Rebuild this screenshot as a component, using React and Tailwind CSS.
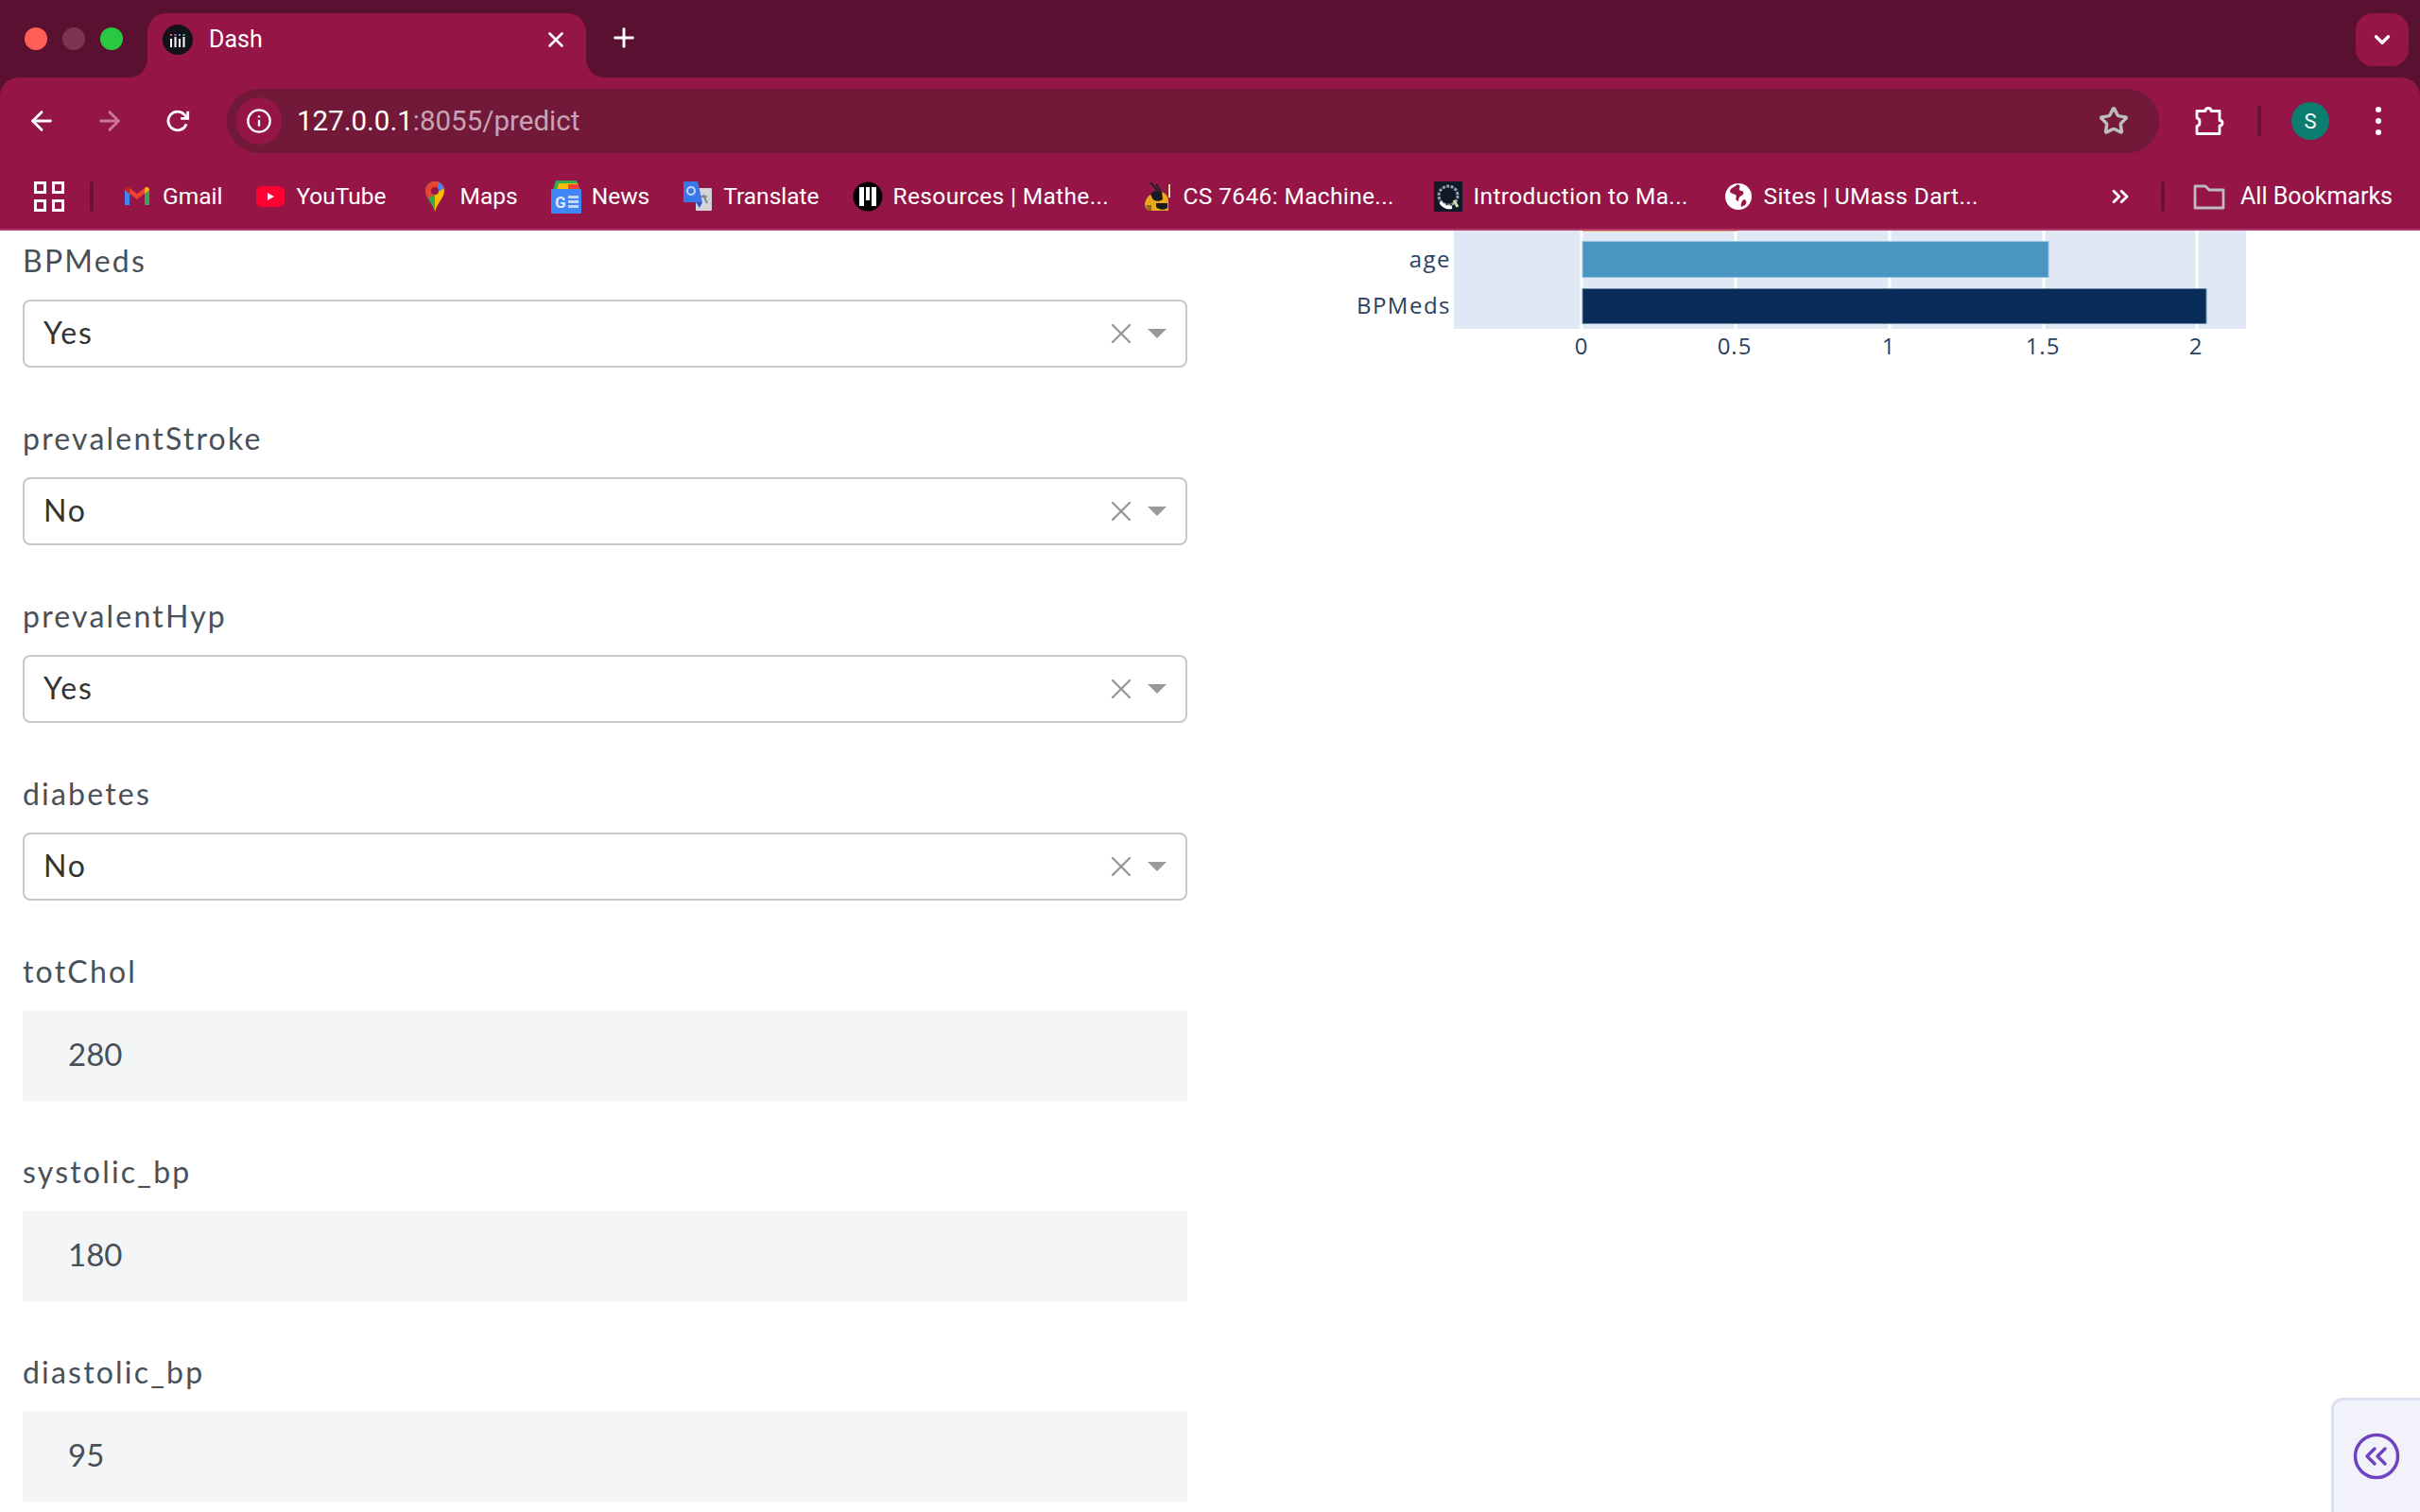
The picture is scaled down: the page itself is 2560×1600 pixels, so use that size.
import React from 'react';
import { ArrowLeft, ArrowRight, Info, Star, X, Plus, ChevronDown, ChevronsRight } from 'lucide-react';

// favicons for the bookmarks bar
const GmailIcon = () => (
  <svg width="32" height="32" viewBox="0 0 32 32">
    <path d="M3 9v16h5V13z" fill="#4285f4" />
    <path d="M24 13v12h5V9z" fill="#34a853" />
    <path d="M3 9l13 10L29 9l-5-2-8 6-8-6z" fill="#ea4335" />
    <path d="M3 9c0-3 3-4 5-2v6z" fill="#c5221f" />
    <path d="M29 9c0-3-3-4-5-2v6z" fill="#fbbc04" />
  </svg>
);

const YoutubeIcon = () => (
  <svg width="32" height="32" viewBox="0 0 32 32">
    <rect x="1" y="5" width="30" height="22" rx="6" fill="#ff0033" />
    <path d="M13 12l7 4-7 4z" fill="#fff" />
  </svg>
);

const MapsIcon = () => (
  <svg width="32" height="36" viewBox="0 0 32 36">
    <path d="M16 2c-6 0-10 4.500-10 10 0 7 7 12 10 22z" fill="#34a853" />
    <path d="M16 2c6 0 10 4.500 10 10 0 7-7 12-10 22z" fill="#fbbc04" />
    <path d="M9 5c2-2 4.500-3 7-3 4 0 8 2 9.500 7L9 20c-2-2.500-3-5-3-8 0-3 1-5.500 3-7z" fill="#ea4335" />
    <path d="M19 2.500c3 1 5.500 3.500 6.500 6.500L19 13z" fill="#4285f4" />
    <circle cx="16" cy="12" r="4" fill="#941546" />
  </svg>
);

const NewsIcon = () => (
  <svg width="32" height="38" viewBox="0 0 32 38">
    <path d="M5 2h22l3 10H2z" fill="#34a853" />
    <path d="M8 5h20l2 7H6z" fill="#fbbc04" />
    <path d="M18 6h10l2 6H18z" fill="#ea4335" />
    <rect x="0" y="11" width="32" height="26" rx="1" fill="#4285f4" />
    <text x="4" y="31" fontSize="17" fontWeight="700" fontFamily="Roboto, sans-serif" fill="#dfe8fb">G</text>
    <rect x="18" y="18" width="11" height="3" fill="#c6d8fa" />
    <rect x="18" y="23" width="11" height="3" fill="#c6d8fa" />
    <rect x="18" y="28" width="11" height="3" fill="#c6d8fa" />
  </svg>
);

const TranslateIcon = () => (
  <svg width="32" height="34" viewBox="0 0 32 34">
    <rect x="14" y="8" width="17" height="24" rx="1" fill="#d4d4d8" />
    <path d="M22 15l4 9M18 17h8" stroke="#7c8a94" strokeWidth="2" fill="none" />
    <path d="M2 1h14l5 22H2a1 1 0 0 1-1-1V2a1 1 0 0 1 1-1z" fill="#3b78e7" />
    <path d="M14 23l4 6 3-6z" fill="#2a56c6" />
    <circle cx="9" cy="11" r="4" fill="none" stroke="#c7d8fa" strokeWidth="2" />
  </svg>
);

const ResourcesIcon = () => (
  <svg width="32" height="32" viewBox="0 0 32 32">
    <circle cx="16" cy="16" r="15.500" fill="#000" />
    <rect x="7" y="6" width="5" height="20" fill="#fff" />
    <rect x="14" y="6" width="4" height="14" fill="#fff" />
    <rect x="20" y="6" width="5" height="20" fill="#fff" />
  </svg>
);

const BeeIcon = () => (
  <svg width="32" height="34" viewBox="0 0 32 34">
    <path d="M2 24c2-8 8-12 16-12 5 0 9 4 9 10v10H8c-4 0-6-4-6-8z" fill="#e9a820" />
    <path d="M8 14c3-3 8-4 12-2l1 8c-4 3-9 2-11-1z" fill="#1a1a1a" />
    <path d="M14 24h12v5c-4 3-9 2-12-1z" fill="#1a1a1a" />
    <path d="M3 26h6v6H6z" fill="#8a6a20" />
    <path d="M8 2l8 9M14 4l5 7" stroke="#222" strokeWidth="2" />
    <rect x="27" y="4" width="2" height="14" fill="#e8d9a0" />
  </svg>
);

const IntroIcon = () => (
  <svg width="30" height="32" viewBox="0 0 30 32">
    <rect width="30" height="32" fill="#111827" />
    <circle cx="15" cy="15" r="10" fill="none" stroke="#9ca3af" strokeWidth="3" strokeDasharray="3 1.500" />
    <path d="M7 22c3 5 8 6 12 5" fill="none" stroke="#fff" strokeWidth="3.500" />
    <path d="M21 20l4 7" stroke="#cfe0a0" strokeWidth="3" />
  </svg>
);

const GlobeIcon = () => (
  <svg width="32" height="32" viewBox="0 0 32 32">
    <circle cx="16" cy="16" r="14" fill="#fff" />
    <path d="M15 3c-2 3-7 3-8 7 0 3 4 3 6 4 2 2-1 4 1 6l2 1c0-3 1-5 3-6 3-1 3-4 1-5-2 0-4-1-3-3 1-1 1-3-2-4zM22 19c-2 1-4 4-3 8l4-2c2-2 2-5-1-6z" fill="#941546" />
  </svg>
);

const ReloadIcon = () => (
  <svg width="30" height="30" viewBox="0 0 28 28" fill="none" stroke="#fff" strokeWidth="2.600">
    <path d="M22.500 17a9.200 9.200 0 1 1-1.800-9.200L23.500 11" />
    <path d="M24 4.500V11.500H17" />
  </svg>
);

const PuzzleIcon = () => (
  <svg width="34" height="34" viewBox="0 0 34 34" fill="none" stroke="#fff" strokeWidth="2.800" strokeLinejoin="round">
    <path d="M4 6.500h9c0-4 6-4 6 0h9v10c4 0 4 5.500 0 5.500v8.500H4v-8c4-.5 4-8-.0-8.500z" />
  </svg>
);

// long titles get cut to one fixed width by the browser, so those labels share it
const bookmarks = [
  { label: 'Gmail', icon: <GmailIcon /> },
  { label: 'YouTube', icon: <YoutubeIcon /> },
  { label: 'Maps', icon: <MapsIcon /> },
  { label: 'News', icon: <NewsIcon /> },
  { label: 'Translate', icon: <TranslateIcon /> },
  { label: 'Resources | Mathe...', icon: <ResourcesIcon />, cut: true },
  { label: 'CS 7646: Machine...', icon: <BeeIcon />, cut: true },
  { label: 'Introduction to Ma...', icon: <IntroIcon />, cut: true },
  { label: 'Sites | UMass Dart...', icon: <GlobeIcon />, cut: true },
];

const TabStrip = () => (
  <div className="flex h-[82px] items-start bg-[#5a1030]">
    <div className="flex h-[82px] w-[156px] items-center gap-[16px] pl-[26px]">
      <span className="h-[24px] w-[24px] rounded-full bg-[#ff5f57]" />
      <span className="h-[24px] w-[24px] rounded-full bg-[#7b3552]" />
      <span className="h-[24px] w-[24px] rounded-full bg-[#28c840]" />
    </div>
    <div className="relative mt-[14px] flex h-[68px] w-[464px] items-center rounded-t-[20px] bg-[#941546] pb-[12px] pl-[16px] pr-[19px]">
      <span className="absolute bottom-0 left-[-20px] h-[20px] w-[20px] bg-[#941546]">
        <span className="block h-full w-full rounded-br-[20px] bg-[#5a1030]" />
      </span>
      <span className="absolute bottom-0 right-[-20px] h-[20px] w-[20px] bg-[#941546]">
        <span className="block h-full w-full rounded-bl-[20px] bg-[#5a1030]" />
      </span>
      <svg width="32" height="32" viewBox="0 0 32 32">
        <circle cx="16" cy="16" r="16" fill="#111318" />
        <g fill="#fff">
          <rect x="8" y="15" width="2" height="9" />
          <rect x="12.500" y="13" width="2" height="11" />
          <rect x="17" y="15" width="2" height="9" />
          <rect x="21.500" y="13" width="2" height="11" />
        </g>
        <rect x="8" y="10" width="2" height="2" fill="#ef5b7b" />
        <rect x="12.500" y="10" width="2" height="2" fill="#b06ab3" />
        <rect x="17" y="10" width="2" height="2" fill="#6f8fd8" />
        <rect x="21.500" y="10" width="2" height="2" fill="#4fb8d8" />
      </svg>
      <span className="ml-[17px] text-[25px] text-white">Dash</span>
      <X className="ml-auto text-white" size={26} strokeWidth={2.4} />
    </div>
    <div className="mt-[12px] flex h-[56px] w-[80px] items-center justify-center">
      <Plus className="text-white" size={32} strokeWidth={2.2} />
    </div>
    <div className="ml-auto mr-[12px] mt-[14px] flex h-[56px] w-[56px] items-center justify-center rounded-[18px] bg-[#941546]">
      <ChevronDown className="text-white" size={26} strokeWidth={3} />
    </div>
  </div>
);

const Toolbar = () => (
  <div className="flex h-[92px] items-center rounded-t-[20px] bg-[#941546] pl-[8px]">
    <div className="flex h-[72px] w-[72px] items-center justify-center">
      <ArrowLeft className="text-white" size={32} strokeWidth={2.2} />
    </div>
    <div className="flex h-[72px] w-[72px] items-center justify-center">
      <ArrowRight className="text-[#c8789a]" size={32} strokeWidth={2.2} />
    </div>
    <div className="flex h-[72px] w-[72px] items-center justify-center">
      <ReloadIcon />
    </div>
    <div className="ml-[16px] flex h-[68px] w-[2044px] items-center rounded-full bg-[#721939] pl-[10px] pr-[32px]">
      <div className="flex h-[50px] w-[48px] items-center justify-center rounded-full bg-[#941546]">
        <Info className="text-white" size={28} strokeWidth={2} />
      </div>
      <span className="ml-[16px] text-[29.5px] text-white">
        127.0.0.1<span className="text-[#c9a3b5]">:8055/predict</span>
      </span>
      <Star className="ml-auto text-[#bcbcbc]" size={32} strokeWidth={2.6} />
    </div>
    <div className="ml-[17px] flex h-[72px] w-[72px] items-center justify-center">
      <PuzzleIcon />
    </div>
    <div className="ml-[15px] h-[32px] w-[4px] rounded-full bg-[#6b0f35]" />
    <div className="ml-[32px] flex h-[40px] w-[40px] items-center justify-center rounded-full bg-[#0b7d6e] text-[22px] text-white">S</div>
    <div className="ml-[32px] flex h-[40px] w-[40px] flex-col items-center justify-center gap-[6px]">
      <span className="h-[6px] w-[6px] rounded-full bg-white" />
      <span className="h-[6px] w-[6px] rounded-full bg-white" />
      <span className="h-[6px] w-[6px] rounded-full bg-white" />
    </div>
  </div>
);

const BookmarksBar = () => (
  <div className="flex h-[70px] items-center border-b-[2px] border-[#b03a6c] bg-[#941546] pl-[36px] text-[24.500px] text-white">
    <div className="grid w-[32px] grid-cols-2 gap-[6px]">
      <span className="h-[13px] w-[13px] border-[3px] border-white" />
      <span className="h-[13px] w-[13px] border-[3px] border-white" />
      <span className="h-[13px] w-[13px] border-[3px] border-white" />
      <span className="h-[13px] w-[13px] border-[3px] border-white" />
    </div>
    <div className="ml-[27px] h-[32px] w-[4px] rounded-full bg-[#6b0f35]" />
    <div className="ml-[30px] flex items-center gap-[35px]">
      {bookmarks.map((b) => (
        <div key={b.label} className="flex items-center gap-[11px] whitespace-nowrap">
          <span className="flex h-[38px] w-[32px] shrink-0 items-center justify-center">{b.icon}</span>
          <span className={b.cut ? 'w-[229px] tracking-[0.350px]' : ''}>{b.label}</span>
        </div>
      ))}
    </div>
    <ChevronsRight className="ml-auto text-white" size={28} strokeWidth={2.4} />
    <div className="ml-[29px] h-[32px] w-[4px] rounded-full bg-[#6b0f35]" />
    <svg className="ml-[30px]" width="34" height="28" viewBox="0 0 34 28" fill="none" stroke="#bcbcbc" strokeWidth="2.800" strokeLinejoin="round">
      <path d="M2 3h11l4 4h15v19H2z" />
    </svg>
    <span className="ml-[16px] mr-[29px] text-[25px]">All Bookmarks</span>
  </div>
);

const SelectField = ({ label, value }) => (
  <div className="mb-[43px]">
    <div className="h-[73px] text-[32px] leading-[64px] tracking-[2.200px] text-[#495057]">{label}</div>
    <div className="flex h-[72px] items-center rounded-[8px] border-[2px] border-[#c8c8c8] bg-white pl-[20px] pr-[20px]">
      <span className="pb-[2px] text-[32px] tracking-[1.800px] text-[#333333]">{value}</span>
      <X className="ml-auto text-[#999999]" size={36} strokeWidth={1.6} />
      <span className="ml-[10px] h-0 w-0 border-x-[10px] border-t-[10px] border-x-transparent border-t-[#999999]" />
    </div>
  </div>
);

const InputField = ({ label, value }) => (
  <div className="mb-[43px]">
    <div className="h-[73px] text-[32px] leading-[64px] tracking-[2.200px] text-[#495057]">{label}</div>
    <div className="flex h-[96px] items-center bg-[#f4f5f7] pb-[2px] pl-[48px] text-[33px] text-[#495057]">{value}</div>
  </div>
);

// x positions are offsets from the left of the svg, not page coordinates
const Chart = () => (
  <svg width="1040" height="140" viewBox="0 0 1040 140" fontFamily="'Open Sans', sans-serif" fontSize="24" fill="#2a3f5f">
    <rect x="178" y="0" width="838" height="104" fill="#e1e8f5" />
    <g stroke="#fff" strokeWidth="3">
      <line x1="313" y1="0" x2="313" y2="104" />
      <line x1="476" y1="0" x2="476" y2="104" />
      <line x1="639" y1="0" x2="639" y2="104" />
      <line x1="802" y1="0" x2="802" y2="104" />
      <line x1="964" y1="0" x2="964" y2="104" />
    </g>
    <rect x="314" y="0" width="164" height="1" fill="#f4a582" />
    <rect x="314" y="11.500" width="493" height="38" fill="#4b95c2" stroke="#92c5de" strokeWidth="1" />
    <rect x="314" y="61.500" width="660" height="37" fill="#0a2c59" stroke="#6f8fb5" strokeWidth="1" />
    <text x="175" y="39" textAnchor="end" letterSpacing="1.500">age</text>
    <text x="175" y="88" textAnchor="end" letterSpacing="1.500">BPMeds</text>
    <g textAnchor="middle" letterSpacing="1">
      <text x="313" y="131">0</text>
      <text x="475" y="131">0.5</text>
      <text x="638" y="131">1</text>
      <text x="801" y="131">1.5</text>
      <text x="963" y="131">2</text>
    </g>
  </svg>
);

export default function App() {
  return (
    <div className="relative h-[1600px] w-[2560px] overflow-hidden bg-white font-['Roboto',sans-serif]">
      <div className="bg-[#5a1030]">
        <TabStrip />
        <Toolbar />
        <BookmarksBar />
      </div>
      <div className="flex">
        <div className="ml-[24px] w-[1232px] font-['Lato',sans-serif]">
          <SelectField label="BPMeds" value="Yes" />
          <SelectField label="prevalentStroke" value="No" />
          <SelectField label="prevalentHyp" value="Yes" />
          <SelectField label="diabetes" value="No" />
          <InputField label="totChol" value="280" />
          <InputField label="systolic_bp" value="180" />
          <InputField label="diastolic_bp" value="95" />
        </div>
        <div className="ml-[104px]">
          <Chart />
        </div>
      </div>
      <div className="absolute bottom-0 right-0 flex h-[121px] w-[94px] items-center justify-center rounded-tl-[12px] border-l-[3px] border-t-[3px] border-[#dcdff0] bg-[#f2f3fa] pr-[1px]">
        <svg width="50" height="50" viewBox="0 0 50 50" fill="none" stroke="#6f42c1" strokeWidth="3.500" strokeLinecap="round" strokeLinejoin="round">
          <circle cx="25" cy="25" r="22.500" />
          <path d="M23 17l-8 8 8 8M34 17l-8 8 8 8" />
        </svg>
      </div>
    </div>
  );
}
